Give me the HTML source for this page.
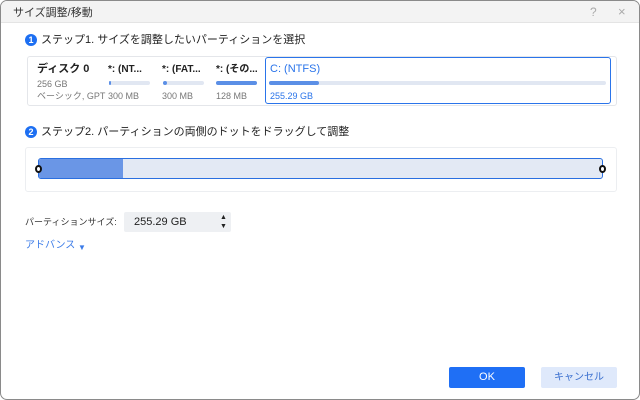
<!DOCTYPE html><html><head><meta charset="utf-8"><style>
*{margin:0;padding:0;box-sizing:border-box}
body{width:640px;height:400px;background:#fff;font-family:"Liberation Sans","Noto Sans CJK JP",sans-serif;position:relative;overflow:hidden;color:#222}
.win{position:absolute;left:0;top:0;width:640px;height:400px;border:1px solid #8a8a8a;border-radius:7px;overflow:hidden;background:#fff}
.a{position:absolute;white-space:nowrap;line-height:12px}
.title{position:absolute;left:0;top:0;width:638px;height:22px;background:#f3f3f3;border-bottom:1px solid #e4e4e4}
.num{width:12px;height:12px;border-radius:50%;background:#1d6ff2;color:#fff;font-size:9px;text-align:center;line-height:12px;font-weight:bold}
.bar{position:absolute;height:4px;border-radius:2px;background:#e1e7f2}
.bar i{position:absolute;left:0;top:0;height:4px;border-radius:2px;background:#5b8fe6}
.s{font-size:9px;color:#777}
.h{font-size:10px;font-weight:bold;color:#222}
</style></head><body><div class="win">
<div class="title"></div>
<div class="a" style="left:12px;top:6px;font-size:11px;color:#333">サイズ調整/移動</div>
<div class="a" style="left:589px;top:5px;font-size:12px;color:#aaa">?</div>
<div class="a" style="left:617px;top:5px;font-size:13px;color:#aaa">×</div>
<div class="a num" style="left:24px;top:33px">1</div>
<div class="a" style="left:40px;top:33px;font-size:11px;color:#222">ステップ1. サイズを調整したいパーティションを選択</div>
<div class="a" style="left:26px;top:55px;width:590px;height:50px;border:1px solid #e4e6ea;border-radius:3px"></div>
<div class="a h" style="left:36px;top:62px;font-size:11px">ディスク 0</div>
<div class="a s" style="left:36px;top:77px">256 GB</div>
<div class="a s" style="left:36px;top:89px">ベーシック, GPT</div>
<div class="a h" style="left:107px;top:63px">*: (NT...</div>
<div class="bar" style="left:108px;top:80px;width:41px"><i style="width:2px"></i></div>
<div class="a s" style="left:107px;top:89px">300 MB</div>
<div class="a h" style="left:161px;top:63px">*: (FAT...</div>
<div class="bar" style="left:162px;top:80px;width:41px"><i style="width:4px"></i></div>
<div class="a s" style="left:161px;top:89px">300 MB</div>
<div class="a h" style="left:215px;top:63px">*: (その...</div>
<div class="bar" style="left:215px;top:80px;width:41px"><i style="width:41px"></i></div>
<div class="a s" style="left:215px;top:89px">128 MB</div>
<div class="a" style="left:264px;top:56px;width:346px;height:47px;border:1.5px solid #2a74ea;border-radius:3px"></div>
<div class="a" style="left:269px;top:62px;font-size:11px;color:#2a74ea">C: (NTFS)</div>
<div class="bar" style="left:268px;top:80px;width:337px"><i style="width:50px"></i></div>
<div class="a" style="left:269px;top:89px;font-size:9px;color:#2a74ea">255.29 GB</div>
<div class="a num" style="left:24px;top:125px">2</div>
<div class="a" style="left:40px;top:125px;font-size:11px;color:#222">ステップ2. パーティションの両側のドットをドラッグして調整</div>
<div class="a" style="left:24px;top:146px;width:592px;height:45px;border:1px solid #eceef1;border-radius:3px"></div>
<div class="a" style="left:37px;top:157px;width:565px;height:21px;background:#e3e9f4;border:1.5px solid #2a6fe0;border-radius:3px;overflow:hidden"><div style="width:84px;height:100%;background:#6a96e6"></div></div>
<div class="a" style="left:34px;top:164px;width:7px;height:8px;border:2px solid #111;border-radius:50%;background:#fff"></div>
<div class="a" style="left:598px;top:164px;width:7px;height:8px;border:2px solid #111;border-radius:50%;background:#fff"></div>
<div class="a" style="left:24px;top:215px;font-size:9px;color:#333">パーティションサイズ:</div>
<div class="a" style="left:123px;top:211px;width:107px;height:20px;background:#eef0f3;border-radius:2px"></div>
<div class="a" style="left:133px;top:215px;font-size:11px;color:#222">255.29 GB</div>
<div class="a" style="left:219px;top:212px;font-size:7px;line-height:9px;color:#222">▲<br>▼</div>
<div class="a" style="left:24px;top:239px;font-size:10px;color:#3b7be8">アドバンス</div>
<div class="a" style="left:77px;top:241px;font-size:8px;color:#3b7be8">▼</div>
<div class="a" style="left:448px;top:366px;width:76px;height:21px;background:#1f6ff5;border-radius:2px;color:#fff;font-size:11px;text-align:center;line-height:21px">OK</div>
<div class="a" style="left:540px;top:366px;width:76px;height:21px;background:#dfe9fb;border-radius:2px;color:#3a6fcf;font-size:10px;text-align:center;line-height:21px">キャンセル</div>
</div></body></html>
